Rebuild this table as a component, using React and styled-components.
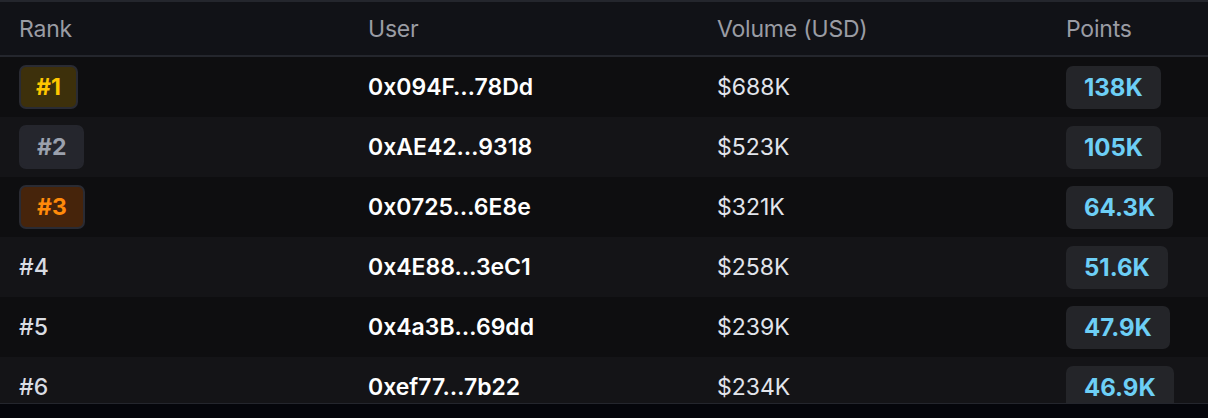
import React from "react";
import styled, { createGlobalStyle } from "styled-components";

const Global = createGlobalStyle`
  html, body { margin: 0; padding: 0; background: #05060b; }
  body { font-family: Inter, "Noto Sans", "Liberation Sans", sans-serif; -webkit-font-smoothing: antialiased; }
`;

const Frame = styled.div`
  height: 404px;
  box-sizing: border-box;
  border-top: 2px solid #24262d;
  border-bottom: 1px solid #24262d;
  overflow: hidden;
  background: #0e0e10;
`;

const Grid = styled.div`
  display: grid;
  grid-template-columns: 349px 349px 349px 1fr;
  padding-left: 19px;
  align-items: center;
`;

const HeaderRow = styled(Grid)`
  height: 55px;
  padding-top: 1px;
  background: #111217;
  border-bottom: 2px solid #24262d;
  box-sizing: border-box;
`;

const HeadCell = styled.div`
  font-size: 23px;
  font-weight: 400;
  color: #9a9ca4;
  letter-spacing: -0.2px;
`;

const Row = styled(Grid)`
  height: 60px;
  background: ${(p) => (p.$alt ? "#141417" : "#0e0e10")};
`;

const RankText = styled.div`
  font-size: 23px;
  font-weight: 500;
  color: #d9dce3;
`;

const rankStyles = {
  1: { bg: "#3d300b", fg: "#ffc700", border: "#2a2b33" },
  2: { bg: "#25262d", fg: "#9ba1ad", border: "#25262d" },
  3: { bg: "#46240b", fg: "#ff8a0a", border: "#2a2b33" },
};

const RankBadge = styled.div`
  justify-self: start;
  box-sizing: border-box;
  height: 44px;
  padding: 0 ${(p) => (p.$rank === 1 ? 15 : 16)}px;
  display: flex;
  align-items: center;
  border-radius: 7px;
  font-size: 23px;
  font-weight: 700;
  background: ${(p) => rankStyles[p.$rank].bg};
  color: ${(p) => rankStyles[p.$rank].fg};
  border: 2px solid ${(p) => rankStyles[p.$rank].border};
`;

const UserCell = styled.div`
  font-size: 23px;
  font-weight: 600;
  color: #ffffff;
`;

const VolumeCell = styled.div`
  font-size: 23px;
  font-weight: 400;
  color: #e2e5ec;
`;

const PointsBadge = styled.div`
  justify-self: start;
  height: 43px;
  box-sizing: border-box;
  padding: 0 18px;
  display: flex;
  align-items: center;
  border-radius: 7px;
  background: #242529;
  color: #6dcff6;
  font-size: 24px;
  font-weight: 700;
`;

const rows = [
  { rank: 1, user: "0x094F…78Dd", vol: "$688K", pts: "138K" },
  { rank: 2, user: "0xAE42…9318", vol: "$523K", pts: "105K" },
  { rank: 3, user: "0x0725…6E8e", vol: "$321K", pts: "64.3K" },
  { rank: 4, user: "0x4E88…3eC1", vol: "$258K", pts: "51.6K" },
  { rank: 5, user: "0x4a3B…69dd", vol: "$239K", pts: "47.9K" },
  { rank: 6, user: "0xef77…7b22", vol: "$234K", pts: "46.9K" },
];

export default function App() {
  return (
    <>
      <Global />
      <Frame>
        <HeaderRow>
          <HeadCell>Rank</HeadCell>
          <HeadCell>User</HeadCell>
          <HeadCell>Volume (USD)</HeadCell>
          <HeadCell>Points</HeadCell>
        </HeaderRow>
        {rows.map((r, i) => (
          <Row key={r.rank} $alt={i % 2 === 1}>
            {r.rank <= 3 ? (
              <RankBadge $rank={r.rank}>#{r.rank}</RankBadge>
            ) : (
              <RankText>#{r.rank}</RankText>
            )}
            <UserCell>{r.user}</UserCell>
            <VolumeCell>{r.vol}</VolumeCell>
            <PointsBadge>{r.pts}</PointsBadge>
          </Row>
        ))}
      </Frame>
    </>
  );
}
